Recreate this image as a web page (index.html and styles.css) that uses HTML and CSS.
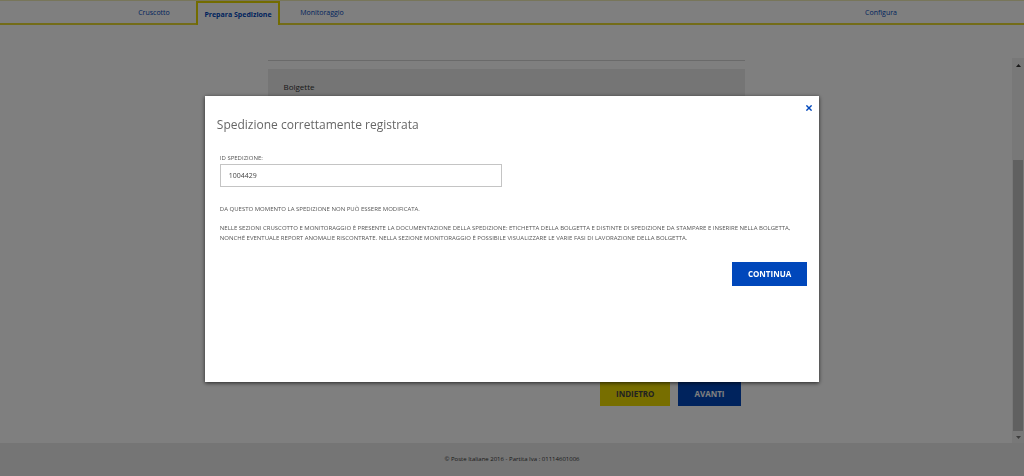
FILE: index.html
```html
<!DOCTYPE html>
<html lang="it">
<head>
<meta charset="utf-8">
<meta name="viewport" content="width=device-width, initial-scale=1">
<title>Prepara Spedizione</title>
<link rel="stylesheet" href="styles.css">
</head>
<body>
<div class="page">
  <header class="topbar">
    <nav class="tabs">
      <a class="tab" href="#">Cruscotto</a>
      <a class="tab tab-active" href="#">Prepara Spedizione</a>
      <a class="tab" href="#">Monitoraggio</a>
      <a class="tab tab-end" href="#">Configura</a>
    </nav>
  </header>
  <div class="scroller">
    <main class="content">
      <div class="column">
        <section class="card">
          <h2 class="card-title">Bolgette</h2>
        </section>
        <div class="actions">
          <button class="btn btn-yellow" type="button">INDIETRO</button>
          <button class="btn btn-blue" type="button">AVANTI</button>
        </div>
      </div>
    </main>
    <div class="scrollbar">
      <svg class="arrow" viewBox="0 0 5 3"><path d="M0 3 2.5 0 5 3z"/></svg>
      <div class="track"><div class="thumb"></div></div>
      <svg class="arrow arrow-down" viewBox="0 0 5 3"><path d="M0 0 2.5 3 5 0z"/></svg>
    </div>
  </div>
  <footer class="footer">© Poste Italiane 2016 - Partita Iva : 01114601006</footer>
</div>

<div class="overlay">
  <div class="dialog" role="dialog" aria-modal="true" aria-labelledby="dialog-title">
    <button class="close" type="button" aria-label="Chiudi">
      <svg class="close-icon" viewBox="0 0 6 6"><path d="M.4.4l5.2 5.2M5.6.4L.4 5.6"/></svg>
    </button>
    <h1 class="dialog-title" id="dialog-title">Spedizione correttamente registrata</h1>
    <form class="dialog-body">
      <label class="label" for="shipment">ID SPEDIZIONE:</label>
      <input class="field" id="shipment" type="text" value="1004429" readonly>
      <p class="note">DA QUESTO MOMENTO LA SPEDIZIONE NON PUÒ ESSERE MODIFICATA.</p>
      <p class="note">NELLE SEZIONI CRUSCOTTO E MONITORAGGIO È PRESENTE LA DOCUMENTAZIONE DELLA SPEDIZIONE: ETICHETTA DELLA BOLGETTA E DISTINTE DI SPEDIZIONE DA STAMPARE E INSERIRE NELLA BOLGETTA, NONCHÉ EVENTUALE REPORT ANOMALIE RISCONTRATE. NELLA SEZIONE MONITORAGGIO È POSSIBILE VISUALIZZARE LE VARIE FASI DI LAVORAZIONE DELLA BOLGETTA.</p>
      <button class="btn btn-blue btn-continue" type="button">CONTINUA</button>
    </form>
  </div>
</div>
</body>
</html>
```

FILE: styles.css
```css
* {
  box-sizing: border-box;
}

body {
  margin: 0;
  font-family: "Open Sans", "Noto Sans", sans-serif;
  font-size: 7px;
  color: #333;
  background: #fff;
}

.page {
  display: flex;
  flex-direction: column;
  height: 100vh;
}

.topbar {
  border-top: 1px solid #f0ecb4;
  box-shadow: inset 0 -2px #e6d830;
}

.tabs {
  display: flex;
  padding: 0 101px 0 112px;
}

.tab {
  width: 84px;
  height: 24px;
  line-height: 24px;
  text-align: center;
  color: #0047bb;
  text-decoration: none;
}

.tab-active {
  border: 2px solid #e6d800;
  border-bottom: 0;
  background: #fff;
  font-weight: 700;
}

.tab-end {
  margin-left: auto;
}

.scroller {
  display: flex;
  flex: 1;
  margin-top: 33px;
  min-height: 0;
}

.content {
  flex: 1;
  padding-top: 2px;
}

.column {
  display: flex;
  flex-direction: column;
  width: 47%;
  min-width: 477px;
  height: 346px;
  margin: 0 auto;
  border-top: 1px solid #d4d4d4;
}

.card {
  flex: 1;
  margin-top: 8px;
  margin-bottom: 24px;
  padding: 11px 16px;
  background: #ebebeb;
}

.card-title {
  margin: 0;
  font-size: 8px;
  line-height: 14px;
  font-weight: 400;
}

.actions {
  display: flex;
  justify-content: flex-end;
  gap: 8px;
  padding-right: 4px;
}

.btn {
  height: 24px;
  padding: 0 16px;
  border: 0;
  font-family: inherit;
  font-size: 8px;
  font-weight: 700;
  line-height: 24px;
}

.btn-yellow {
  background: #eedc00;
  color: #444;
}

.btn-blue {
  background: #0047bb;
  color: #fff;
}

.scrollbar {
  display: flex;
  flex-direction: column;
  align-items: center;
  width: 12px;
  padding: 6px 0 4px;
  background: #f1f1f1;
}

.arrow {
  width: 5px;
  height: 3px;
  fill: #333;
}

.arrow-down {
  fill: #777;
}

.track {
  flex: 1;
  width: 10px;
  padding: 93px 0 5px;
}

.thumb {
  height: 100%;
  background: #c1c1c1;
}

.footer {
  height: 33px;
  line-height: 32px;
  font-size: 6px;
  text-align: center;
  background: #ebebeb;
}

.overlay {
  position: fixed;
  inset: 0;
  padding: 96px 20% 94px;
  background: rgba(0, 0, 0, 0.5);
}

.dialog {
  position: relative;
  height: 100%;
  padding: 20px 12px;
  background: #fff;
  box-shadow: 0 1px 4px rgba(0, 0, 0, 0.7);
}

.close {
  position: absolute;
  top: 6px;
  right: 4px;
  display: flex;
  align-items: center;
  justify-content: center;
  width: 12px;
  height: 12px;
  padding: 0;
  border: 0;
  background: none;
}

.close-icon {
  width: 6px;
  height: 6px;
  fill: none;
  stroke: #0047bb;
  stroke-width: 1.4;
}

.dialog-title {
  margin: 0;
  font-size: 12px;
  line-height: 18px;
  font-weight: 400;
  color: #666;
}

.dialog-body {
  display: flex;
  flex-direction: column;
  align-items: flex-start;
  margin-top: 19px;
  padding-left: 3px;
}

.label {
  font-size: 6px;
  line-height: 10px;
  color: #555;
}

.field {
  width: 48%;
  height: 23px;
  margin: 1px 0 17px;
  padding: 0 8px;
  border: 1px solid #c4c4c4;
  font-family: inherit;
  font-size: 7px;
  color: #444;
}

.note {
  margin: 0 0 9px;
  font-size: 6px;
  line-height: 10px;
  color: #555;
}

.btn-continue {
  align-self: flex-end;
  margin-top: 10px;
}
```
